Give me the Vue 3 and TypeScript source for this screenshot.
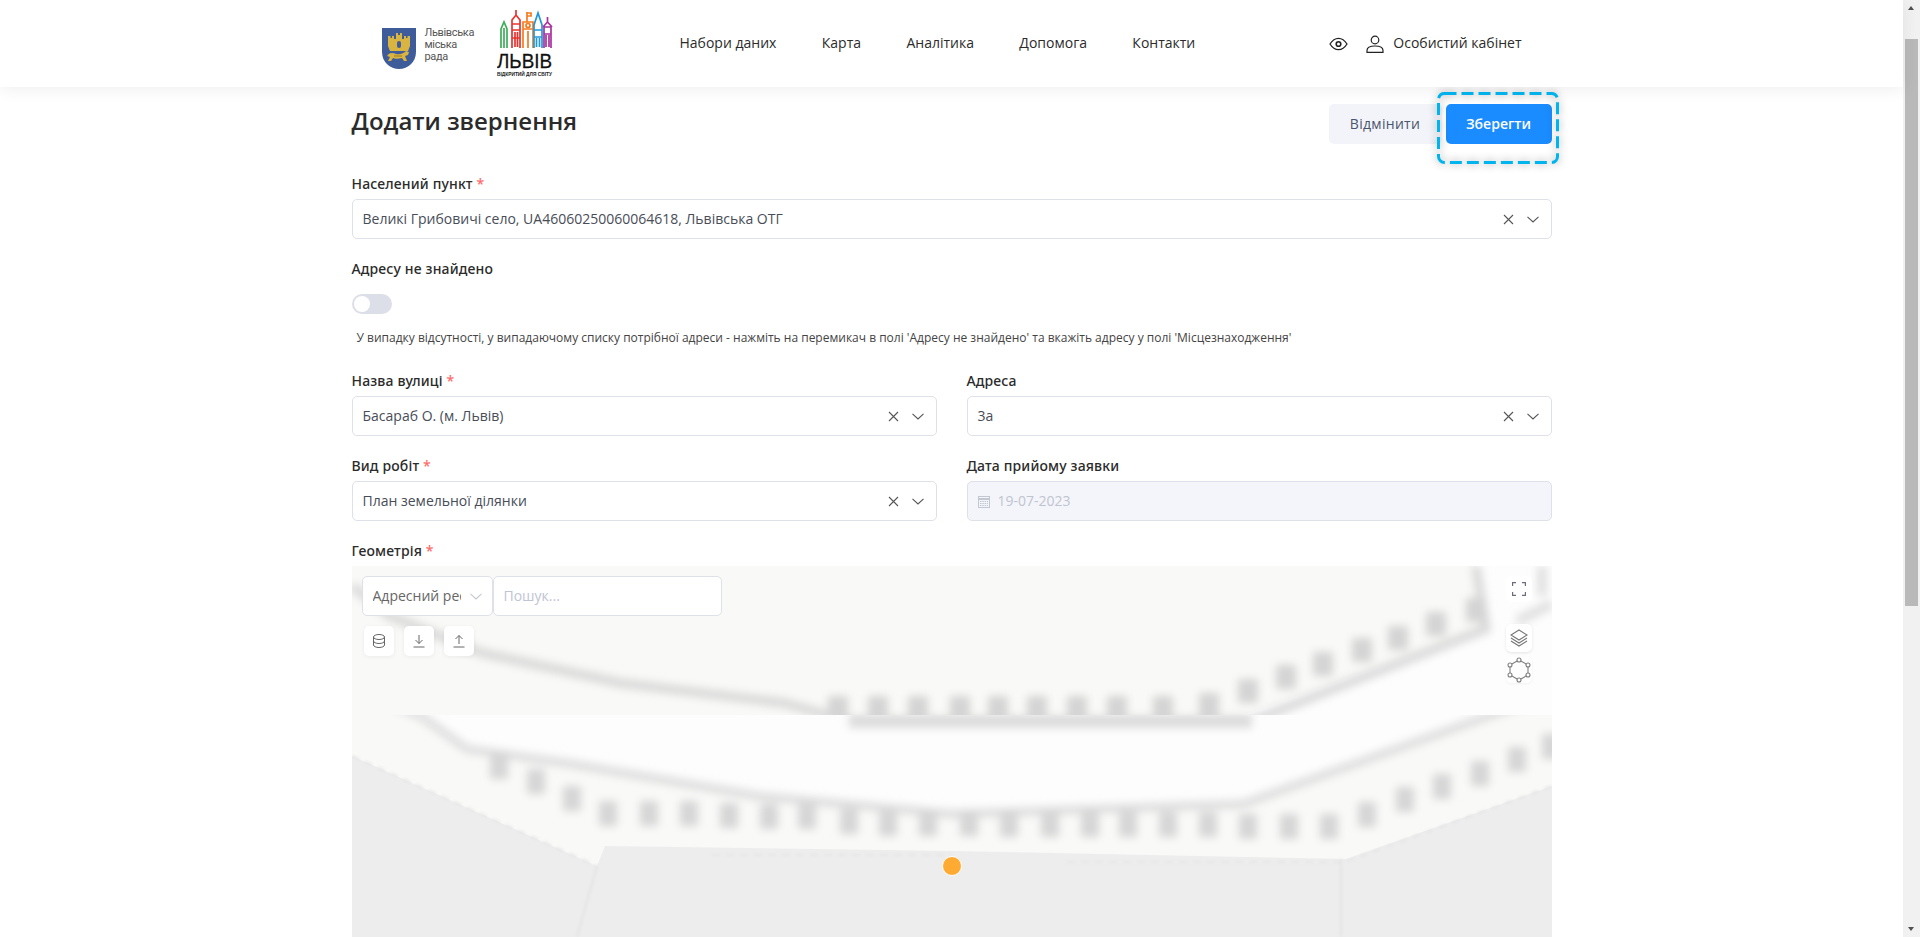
<script setup lang="ts">
const navItems: string[] = ['Набори даних', 'Карта', 'Аналітика', 'Допомога', 'Контакти']

const topSquares: number[][] = [
  [486, 141], [526, 141], [566, 141],
  [608, 141], [646, 141], [685, 141], [725, 141], [765, 141], [811, 141], [857, 138],
  [896, 124], [934, 110], [971, 97], [1010, 83], [1046, 71], [1084, 57], [1124, 43],
]
const lowSquares: number[][] = [
  [147, 200], [184, 215], [220, 232], [256, 247], [297, 247], [337, 247], [377, 249], [417, 250],
  [455, 250], [497, 255], [536, 257], [576, 257], [617, 257], [657, 258], [698, 258], [738, 258],
  [776, 258], [816, 258], [856, 258], [896, 260], [937, 260], [977, 260], [1015, 248], [1053, 233],
  [1090, 220], [1128, 207], [1165, 193], [1199, 180],
]
</script>

<template>
  <div class="root">
    <div class="page">
      <header class="header">
        <div class="header-inner">
          <div class="brand">
            <svg class="shield" width="34" height="42" viewBox="0 0 34 42">
              <path d="M0 0H34V24C34 34 26 41 17 41C8 41 0 34 0 24Z" fill="#3f5c9a" />
              <path d="M6 18V8H8.500V10H10V8H12V11H14V5H16V7H18V5H20V11H22V8H24V10H25.500V8H28V18L26 23H8Z" fill="#d9b440" />
              <rect x="15" y="13" width="4" height="7" rx="2" fill="#3f5c9a" />
              <path d="M5 28C8 24 11 25 14 26C18 27 22 25 24 23L27 24L26 27L23 28L25 33H22L20 30C16 31 13 31 11 30L9 33H6L8 29Z" fill="#d9b440" />
              <path d="M12 28H20" stroke="#8a6d1c" stroke-width=".8" />
            </svg>
            <div class="city-name">
              <span>Львівська</span>
              <span>міська</span>
              <span>рада</span>
            </div>
            <svg class="lviv" width="56" height="70" viewBox="0 0 56 70">
              <g fill="none" stroke-width="1.700">
                <g stroke="#3fae5a">
                  <path d="M4 38V19L7 12L10 19V38" />
                  <path d="M7 18V38" />
                </g>
                <g stroke="#e6332f">
                  <path d="M15 38V10L19 5L23 10V38M15 14H23M15 20H23M15 28H23M19 0V5" />
                  <path d="M18 22V37M20.500 22V37" />
                </g>
                <g stroke="#f47c20">
                  <path d="M26 38V12H36V38M26 19H36M31 21V38M30 2V12M30 3H34V6H30" />
                  <circle cx="31" cy="15.500" r="2" />
                </g>
                <g stroke="#2198d8">
                  <path d="M37 38V15L41 3L45 15V38M37 20H45M37 27H45" />
                  <path d="M39.500 28V37M42.500 28V37" />
                </g>
                <g stroke="#a9329e">
                  <path d="M47 38V17H54V38M46 17L50.500 12L55 17M50.500 7V12M47 24H54" />
                  <path d="M49 25V37M52 25V37" />
                </g>
              </g>
              <text x="0" y="58" class="lviv-big" textLength="55" lengthAdjust="spacingAndGlyphs">ЛЬВІВ</text>
              <text x="0" y="66" class="lviv-small" textLength="55" lengthAdjust="spacingAndGlyphs">ВІДКРИТИЙ ДЛЯ СВІТУ</text>
            </svg>
          </div>
          <nav class="nav">
            <a v-for="item in navItems" :key="item" class="nav-link">{{ item }}</a>
          </nav>
          <div class="account">
            <svg width="19" height="14" viewBox="0 0 19 14" fill="none" stroke="#222" stroke-width="1.300">
              <path d="M1 7C3.500 3 6.500 1.300 9.500 1.300S15.500 3 18 7C15.500 11 12.500 12.700 9.500 12.700S3.500 11 1 7Z" />
              <circle cx="9.500" cy="7" r="2.300" stroke-width="1.600" />
            </svg>
            <svg class="user" width="18" height="18" viewBox="0 0 18 18" fill="none" stroke="#222" stroke-width="1.200">
              <circle cx="9" cy="5" r="3.800" />
              <path d="M1 17.300V15.500C1 13 4 11 9 11S17 13 17 15.500V17.300Z" />
            </svg>
            <span class="account-text">Особистий кабінет</span>
          </div>
        </div>
      </header>

      <main class="main">
        <div class="title-row">
          <h1 class="title">Додати звернення</h1>
          <div class="actions">
            <button class="btn btn-cancel">Відмінити</button>
            <div class="save-wrap">
              <button class="btn btn-save">Зберегти</button>
              <svg class="focus-ring" width="123" height="73" viewBox="0 0 123 73">
                <rect x="1.500" y="1.500" width="119" height="69" rx="6" fill="none" stroke="#00b5ef" stroke-width="3" stroke-dasharray="12 5" />
              </svg>
            </div>
          </div>
        </div>

        <div class="field">
          <label class="label">Населений пункт <i>*</i></label>
          <div class="input">
            <span class="value">Великі Грибовичі село, UA46060250060064618, Львівська ОТГ</span>
            <svg class="clear" width="11" height="11" viewBox="0 0 11 11"><path d="M1 1L10 10M10 1L1 10" stroke="#555" stroke-width="1.100" /></svg>
            <svg class="chev" width="12" height="7" viewBox="0 0 12 7"><path d="M.5 .8L6 6L11.500 .8" fill="none" stroke="#555" stroke-width="1.100" /></svg>
          </div>
        </div>

        <div class="toggle-block">
          <label class="label">Адресу не знайдено</label>
          <div class="toggle"><span class="knob"></span></div>
          <p class="hint">У випадку відсутності, у випадаючому списку потрібної адреси - нажміть на перемикач в полі 'Адресу не знайдено' та вкажіть адресу у полі 'Місцезнаходження'</p>
        </div>

        <div class="grid">
          <div class="field">
            <label class="label">Назва вулиці <i>*</i></label>
            <div class="input">
              <span class="value">Басараб О. (м. Львів)</span>
              <svg class="clear" width="11" height="11" viewBox="0 0 11 11"><path d="M1 1L10 10M10 1L1 10" stroke="#555" stroke-width="1.100" /></svg>
              <svg class="chev" width="12" height="7" viewBox="0 0 12 7"><path d="M.5 .8L6 6L11.500 .8" fill="none" stroke="#555" stroke-width="1.100" /></svg>
            </div>
          </div>
          <div class="field">
            <label class="label">Адреса</label>
            <div class="input">
              <span class="value">3а</span>
              <svg class="clear" width="11" height="11" viewBox="0 0 11 11"><path d="M1 1L10 10M10 1L1 10" stroke="#555" stroke-width="1.100" /></svg>
              <svg class="chev" width="12" height="7" viewBox="0 0 12 7"><path d="M.5 .8L6 6L11.500 .8" fill="none" stroke="#555" stroke-width="1.100" /></svg>
            </div>
          </div>
          <div class="field">
            <label class="label">Вид робіт <i>*</i></label>
            <div class="input">
              <span class="value">План земельної ділянки</span>
              <svg class="clear" width="11" height="11" viewBox="0 0 11 11"><path d="M1 1L10 10M10 1L1 10" stroke="#555" stroke-width="1.100" /></svg>
              <svg class="chev" width="12" height="7" viewBox="0 0 12 7"><path d="M.5 .8L6 6L11.500 .8" fill="none" stroke="#555" stroke-width="1.100" /></svg>
            </div>
          </div>
          <div class="field">
            <label class="label">Дата прийому заявки</label>
            <div class="input disabled">
              <svg class="cal" width="12" height="13" viewBox="0 0 12 13" fill="none" stroke="#c3c7d2">
                <rect x=".5" y="1.500" width="11" height="11" />
                <path d="M0 4H12" stroke-width="2" />
                <path d="M2 6.500H10M2 8.500H10M2 10.500H10" stroke-dasharray="1.500 .8" />
              </svg>
              <span class="value">19-07-2023</span>
            </div>
          </div>
        </div>

        <label class="label geo-label">Геометрія <i>*</i></label>
        <div class="map">
          <svg class="tiles" width="1200" height="371" viewBox="0 0 1200 371">
            <defs>
              <filter id="blur-lg" x="-10%" y="-10%" width="120%" height="120%"><feGaussianBlur stdDeviation="4.500" /></filter>
              <filter id="blur-sm" x="-10%" y="-10%" width="120%" height="120%"><feGaussianBlur stdDeviation="1.500" /></filter>
              <clipPath id="top-tile"><rect width="1200" height="149" /></clipPath>
              <clipPath id="low-tile"><rect y="149" width="1200" height="222" /></clipPath>
            </defs>
            <g clip-path="url(#top-tile)">
              <rect width="1200" height="149" fill="#f9f9f7" />
              <path d="M891 149L1134 63L1124 0H1200V149Z" fill="#fdfdfd" />
              <g filter="url(#blur-lg)">
                <path d="M0 20L38 50L130 87L268 117L432 137L497 155H900L1134 63L1124 0" fill="none" stroke="#d8d8d8" stroke-width="9" />
                <rect v-for="s in topSquares" :key="s[0]" :x="s[0] - 10" :y="s[1] - 11" width="20" height="24" fill="#d4d4d4" />
                <path d="M1190 0V30M1165 55L1200 38" stroke="#e0e0e0" stroke-width="10" fill="none" />
              </g>
            </g>
            <g clip-path="url(#low-tile)">
              <rect y="149" width="1200" height="222" fill="#f9f9f8" />
              <path d="M60 149H1200V128L1136 150L891 238L600 248L406 230L214 197L115 183Z" fill="#fdfdfd" />
              <path d="M0 190L245 300L253 280L600 285L994 293L1200 220V371H0Z" fill="#ededed" />
              <g filter="url(#blur-lg)">
                <path d="M0 120L69 150L115 183L214 197L406 230L600 248L891 238L1136 150L1200 128" fill="none" stroke="#dcdcdc" stroke-width="8" />
                <path d="M497 155H900" stroke="#dcdcdc" stroke-width="14" />
                <rect v-for="s in lowSquares" :key="s[0]" :x="s[0] - 9" :y="s[1] - 12" width="18" height="25" fill="#d6d6d6" />
              </g>
              <g filter="url(#blur-sm)">
                <path d="M245 300L225 371M989 293V371" stroke="#e3e3e3" stroke-width="2" fill="none" />
                <path d="M0 190L245 300M360 289H600M715 296H994L1200 220" stroke="#e5e5e5" stroke-width="2" stroke-dasharray="8 6" fill="none" />
              </g>
            </g>
          </svg>

          <div class="map-tools">
            <div class="search-row">
              <div class="map-select">
                <span class="map-select-text">Адресний реєстр</span>
                <svg width="12" height="7" viewBox="0 0 12 7"><path d="M.5 .8L6 6L11.500 .8" fill="none" stroke="#c5c8d2" stroke-width="1.100" /></svg>
              </div>
              <div class="map-search">Пошук...</div>
            </div>
            <div class="tool-row">
              <button class="tool">
                <svg width="12" height="14" viewBox="0 0 12 14" fill="none" stroke="#666">
                  <ellipse cx="6" cy="3" rx="5.500" ry="2.500" />
                  <path d="M.5 3V11C.5 12.400 3 13.500 6 13.500S11.500 12.400 11.500 11V3M.5 7C.5 8.400 3 9.500 6 9.500S11.500 8.400 11.500 7" />
                </svg>
              </button>
              <button class="tool">
                <svg width="14" height="14" viewBox="0 0 14 14" fill="none" stroke="#666">
                  <path d="M7 1V9.500M3.500 6L7 9.500L10.500 6M1.500 13H12.500" />
                </svg>
              </button>
              <button class="tool">
                <svg width="14" height="14" viewBox="0 0 14 14" fill="none" stroke="#666">
                  <path d="M7 10V1.500M3.500 5L7 1.500L10.500 5M1.500 13H12.500" />
                </svg>
              </button>
            </div>
          </div>

          <div class="map-side">
            <button class="side-btn">
              <svg width="14" height="14" viewBox="0 0 14 14" fill="none" stroke="#6f6a80" stroke-width="1.200">
                <path d="M.6 4V.6H4M10 .6H13.400V4M13.400 10V13.400H10M4 13.400H.6V10" />
              </svg>
            </button>
            <button class="side-btn layers">
              <svg width="18" height="18" viewBox="0 0 18 18" fill="none" stroke="#777" stroke-width="1.100">
                <path d="M9 1L17 6L9 11L1 6Z" />
                <path d="M1 9L9 14L17 9M1 12L9 17L17 12" />
              </svg>
            </button>
            <button class="side-btn poly">
              <svg width="24" height="26" viewBox="0 0 24 26" fill="none" stroke="#808080" stroke-width="1.100">
                <path d="M12 3L21 8V18L12 23L3 18V8Z" />
                <g fill="#fff">
                  <circle cx="12" cy="3" r="2" />
                  <circle cx="21" cy="8" r="2" />
                  <circle cx="21" cy="18" r="2" />
                  <circle cx="12" cy="23" r="2" />
                  <circle cx="3" cy="18" r="2" />
                  <circle cx="3" cy="8" r="2" />
                </g>
              </svg>
            </button>
          </div>

          <span class="marker"></span>
        </div>
      </main>
    </div>

    <div class="scrollbar">
      <span class="arrow up"></span>
      <span class="thumb"></span>
      <span class="arrow down"></span>
    </div>
  </div>
</template>

<style>
html, body { margin: 0; height: 100%; overflow: hidden; background: #fff; }
</style>

<style scoped>
* { box-sizing: border-box; }
.root {
  display: flex;
  height: 937px;
  overflow: hidden;
  font-family: "Open Sans", "Noto Sans", sans-serif;
  color: #2b2b2b;
}
.page { flex: 1; min-width: 0; display: flex; flex-direction: column; }

.header {
  height: 87px;
  flex: none;
  background: #fff;
  box-shadow: 0 2px 16px rgba(0, 0, 0, .07);
  position: relative;
  z-index: 2;
}
.header-inner {
  width: 1200px;
  height: 100%;
  margin: 0 auto;
  padding: 0 30px;
  display: flex;
  align-items: center;
}
.brand { display: flex; align-items: flex-start; width: 298px; height: 100%; position: relative; }
.shield { margin-top: 28px; }
.city-name {
  display: flex;
  flex-direction: column;
  margin: 27px 0 0 9px;
  width: 72px;
  font-family: "Roboto", sans-serif;
  font-size: 11px;
  letter-spacing: -.35px;
  line-height: 12px;
  color: #555;
}
.lviv { margin-top: 10px; }
.lviv-big { font-family: "Liberation Sans", sans-serif; font-size: 21px; fill: #111; stroke: #111; stroke-width: .3px; }
.lviv-small { font-family: "Liberation Sans", sans-serif; font-size: 5px; font-weight: 700; fill: #222; }

.nav { display: flex; gap: 45.400px; padding-bottom: 2px; font-size: 14px; color: #2b2b2b; }
.nav-link { white-space: nowrap; }
.account { margin-left: auto; display: flex; align-items: center; font-size: 14px; }
.user { margin-left: 18px; }
.account-text { margin-left: 9px; padding-bottom: 2px; }

.main { width: 1200px; margin: 0 auto; flex: 1; min-height: 0; padding-top: 17px; display: flex; flex-direction: column; }
.title-row { display: flex; justify-content: space-between; align-items: flex-start; height: 40px; margin-bottom: 30px; }
.title { margin: 0; font-size: 24px; font-weight: 600; line-height: 33px; color: #2b2b2b; }
.actions { display: flex; gap: 4px; }
.btn {
  height: 40px;
  padding: 0 0 2px;
  border: 0;
  border-radius: 5px;
  font-family: inherit;
  font-size: 14px;
  cursor: pointer;
}
.btn-cancel { width: 113px; background: #f3f4f9; color: #4a5570; font-weight: 400; letter-spacing: .3px; }
.btn-save { width: 106px; background: #1a8cff; color: #fff; font-weight: 600; }
.save-wrap { position: relative; display: flex; }
.focus-ring {
  position: absolute;
  left: -9px;
  top: -12px;
  filter: drop-shadow(0 0 4px rgba(0, 0, 0, .4));
  pointer-events: none;
}

.field { display: flex; flex-direction: column; }
.label {
  display: block;
  font-family: "Noto Sans", "Open Sans", sans-serif;
  font-size: 14px;
  line-height: 20px;
  font-weight: 500;
  letter-spacing: .15px;
  color: #2b2b2b;
  margin-bottom: 5px;
}
.label i { font-style: normal; color: #ff6b6b; }
.input {
  height: 40px;
  display: flex;
  align-items: center;
  padding: 0 12px 0 10px;
  background: #fff;
  border: 1px solid #dfe1ea;
  border-radius: 5px;
  font-size: 14px;
  color: #484d58;
}
.value { flex: 1; white-space: nowrap; padding-bottom: 2px; }
.clear { margin-right: 13px; }
.disabled { background: #f4f5fa; color: #c0c4d0; }
.cal { margin-right: 8px; flex: none; }

.toggle-block { margin-top: 20px; }
.toggle-block .label { margin-bottom: 15px; }
.toggle { width: 40px; height: 20px; border-radius: 10px; background: #dcdfe8; padding: 2px; }
.knob { display: block; width: 16px; height: 16px; border-radius: 50%; background: #fff; }
.hint { margin: 15px 0 0; padding-left: 5px; font-size: 12px; line-height: 18px; color: #444; white-space: nowrap; }

.grid { display: grid; grid-template-columns: 585px 585px; column-gap: 30px; row-gap: 20px; margin-top: 24px; }
.geo-label { margin-top: 20px; }

.map { position: relative; flex: 1; min-height: 0; overflow: hidden; background: #f9f9f8; }
.tiles { display: block; position: absolute; left: 0; top: 0; }
.map-tools { position: absolute; left: 10px; top: 10px; }
.search-row { display: flex; }
.map-select {
  width: 131px;
  height: 40px;
  padding: 0 10px;
  display: flex;
  align-items: center;
  justify-content: space-between;
  background: #fff;
  border: 1px solid #dfe1ea;
  border-radius: 5px;
  font-size: 14px;
  color: #666;
}
.map-select-text { width: 88px; overflow: hidden; white-space: nowrap; padding-bottom: 2px; }
.map-search {
  width: 229px;
  height: 40px;
  padding: 0 10px 2px;
  display: flex;
  align-items: center;
  background: #fff;
  border: 1px solid #dfe1ea;
  border-radius: 5px;
  font-size: 14px;
  color: #c0c4d4;
}
.tool-row { display: flex; gap: 10px; margin: 10px 0 0 2px; }
.tool {
  width: 30px;
  height: 30px;
  padding: 0;
  display: flex;
  align-items: center;
  justify-content: center;
  background: #fff;
  border: 0;
  border-radius: 5px;
  box-shadow: 0 1px 4px rgba(0, 0, 0, .06);
}
.map-side { position: absolute; right: 20px; top: 10px; display: flex; flex-direction: column; }
.side-btn {
  width: 26px;
  height: 26px;
  padding: 0;
  display: flex;
  align-items: center;
  justify-content: center;
  background: #fff;
  border: 0;
  border-radius: 5px;
}
.layers { height: 28px; margin-top: 22px; box-shadow: 0 1px 3px rgba(0, 0, 0, .1); }
.poly { margin-top: 5px; box-shadow: 0 1px 3px rgba(0, 0, 0, .05); }
.marker {
  position: absolute;
  left: 590px;
  top: 290px;
  width: 20px;
  height: 20px;
  border-radius: 50%;
  background: #ffab33;
  border: 1.500px solid #fff;
}

.scrollbar {
  width: 17px;
  flex: none;
  background: #f1f1f1;
  position: relative;
}
.thumb { position: absolute; left: 2px; top: 39px; width: 13px; height: 567px; background: #b9b9b9; }
.arrow { position: absolute; left: 5px; width: 0; height: 0; border-left: 3.500px solid transparent; border-right: 3.500px solid transparent; }
.up { top: 6px; border-bottom: 4px solid #505050; }
.down { bottom: 6px; border-top: 4px solid #505050; }
</style>
